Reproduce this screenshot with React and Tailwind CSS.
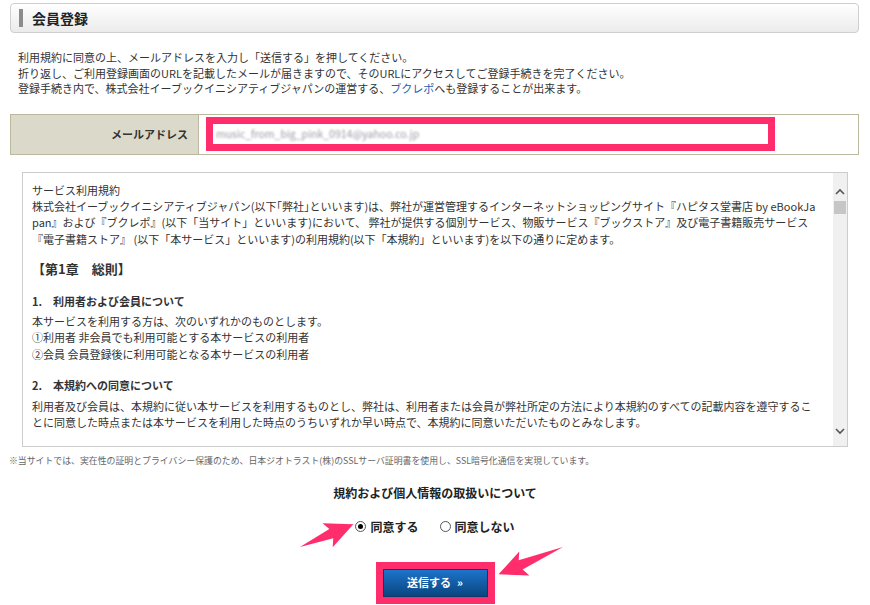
import React, { useState } from 'react';

const jp = { fontFamily: '"Noto Sans CJK JP", "Noto Sans", sans-serif' };

function Arrows() {
  // 注釈の矢印（スクリーンショット上の書き込み）
  const arrow = (L) => `0,0 ${L - 24},-5 ${L - 28},-13 ${L},0 ${L - 28},13 ${L - 24},5`;
  return (
    <svg className="absolute left-0 top-0 pointer-events-none" width="870" height="605">
      <polygon points={arrow(58)} fill="#ff2d6b" transform="translate(300 547) rotate(-23)" />
      <polygon points={arrow(70)} fill="#ff2d6b" transform="translate(563 547) rotate(157)" />
    </svg>
  );
}

function Radio({ checked, label, onClick }) {
  return (
    <label className="flex items-center gap-[4px] cursor-pointer" onClick={onClick}>
      <span className="w-[11px] h-[11px] rounded-full border border-[#555] bg-white flex items-center justify-center">
        {checked && <span className="w-[5px] h-[5px] rounded-full bg-black" />}
      </span>
      <span className="font-bold text-[12px] text-[#222]">{label}</span>
    </label>
  );
}

export default function App() {
  const [agree, setAgree] = useState(true);

  return (
    <div className="relative w-[870px] h-[605px] overflow-hidden bg-white text-[#333]" style={jp}>
      <div className="pl-[10px] pr-[11px] pt-[3px]">
        {/* 見出し */}
        <div className="h-[30px] rounded-[4px] border border-[#cfcfcf] bg-gradient-to-b from-white to-[#ebebeb] flex items-center pl-[8px]">
          <span className="w-[4px] h-[18px] bg-[#8c8c8c]" />
          <h1 className="ml-[9px] text-[14px] font-bold text-[#222]">会員登録</h1>
        </div>

        {/* 説明 */}
        <div className="mt-[17px] pl-[8px] text-[11px] leading-[15.5px] text-[#333]">
          <p>利用規約に同意の上、メールアドレスを入力し「送信する」を押してください。</p>
          <p>折り返し、ご利用登録画面のURLを記載したメールが届きますので、そのURLにアクセスしてご登録手続きを完了ください。</p>
          <p>
            登録手続き内で、株式会社イーブックイニシアティブジャパンの運営する、
            <span className="text-[#1a5fb4]">ブクレポ</span>へも登録することが出来ます。
          </p>
        </div>

        {/* メールアドレス */}
        <div className="mt-[17px] h-[41px] border border-[#bcb89d] flex">
          <div className="w-[188px] bg-[#dbd9c9] border-r border-[#bcb89d] flex items-center justify-end pr-[10px]">
            <span className="text-[11px] font-bold text-[#333]">メールアドレス</span>
          </div>
          <div className="flex-1 flex items-center pl-[7px]">
            <div className="w-[569px] h-[34px] border-[7px] border-[#ff2d6b] bg-white flex items-center pl-[3px]">
              <span className="text-[10.5px] text-[#9a9aa8] blur-[1px]">music_from_big_pink_0914@yahoo.co.jp</span>
            </div>
          </div>
        </div>

        {/* 規約 */}
        <div className="mt-[17px] ml-[12px] w-[826px] h-[275px] border border-[#cccccc] flex">
          <div className="flex-1 overflow-hidden pl-[9px] pt-[9px] text-[11px] leading-[16.4px] text-[#333]">
            <p>サービス利用規約</p>
            <p className="whitespace-nowrap">株式会社イーブックイニシアティブジャパン(以下｢弊社｣といいます)は、弊社が運営管理するインターネットショッピングサイト『ハピタス堂書店 by eBookJa</p>
            <p className="whitespace-nowrap">pan』および『ブクレポ』(以下「当サイト」といいます)において、 弊社が提供する個別サービス、物販サービス『ブックストア』及び電子書籍販売サービス</p>
            <p className="whitespace-nowrap">『電子書籍ストア』 (以下「本サービス」といいます)の利用規約(以下「本規約」といいます)を以下の通りに定めます。</p>
            <p className="mt-[14px] font-bold text-[13px]">【第1章　総則】</p>
            <p className="mt-[15px] font-bold">1.　利用者および会員について</p>
            <p className="mt-[4px]">本サービスを利用する方は、次のいずれかのものとします。</p>
            <p>①利用者 非会員でも利用可能とする本サービスの利用者</p>
            <p>②会員 会員登録後に利用可能となる本サービスの利用者</p>
            <p className="mt-[15px] font-bold">2.　本規約への同意について</p>
            <p className="mt-[4px] whitespace-nowrap">利用者及び会員は、本規約に従い本サービスを利用するものとし、弊社は、利用者または会員が弊社所定の方法により本規約のすべての記載内容を遵守するこ</p>
            <p className="whitespace-nowrap">とに同意した時点または本サービスを利用した時点のうちいずれか早い時点で、本規約に同意いただいたものとみなします。</p>
          </div>
          <div className="w-[14px] bg-[#f0f0f0] flex flex-col items-center">
            <svg width="10" height="8" viewBox="0 0 10 8" className="mt-[15px]">
              <path d="M1 6 L5 2 L9 6" stroke="#555" strokeWidth="1.6" fill="none" />
            </svg>
            <div className="mt-[5px] w-[12px] h-[13px] bg-[#c6c6c6]" />
            <div className="flex-1" />
            <svg width="10" height="8" viewBox="0 0 10 8" className="mb-[11px]">
              <path d="M1 2 L5 6 L9 2" stroke="#555" strokeWidth="1.6" fill="none" />
            </svg>
          </div>
        </div>

        {/* 注意書き */}
        <p className="mt-[8px] -ml-[1px] text-[8.9px] leading-[12px] text-[#666]">
          ※当サイトでは、実在性の証明とプライバシー保護のため、日本ジオトラスト(株)のSSLサーバ証明書を使用し、SSL暗号化通信を実現しています。
        </p>

        {/* 同意 */}
        <div className="flex flex-col items-center pl-[1px]">
          <p className="mt-[17px] text-[12px] font-bold text-[#222] leading-[18px]">規約および個人情報の取扱いについて</p>
          <div className="mt-[16px] flex items-center gap-[21px]">
            <Radio checked={agree} label="同意する" onClick={() => setAgree(true)} />
            <Radio checked={!agree} label="同意しない" onClick={() => setAgree(false)} />
          </div>
          <div className="mt-[26px] border-[7px] border-[#ff2d6b] bg-[#ff2d6b]">
            <button className="w-[105px] h-[28px] bg-gradient-to-b from-[#1c74cc] to-[#0b4680] border border-[#0a3a6a] text-white text-[11px] font-bold flex items-center justify-center gap-[6px]">
              送信する <span className="text-[11px]">»</span>
            </button>
          </div>
        </div>
      </div>
      <Arrows />
    </div>
  );
}
